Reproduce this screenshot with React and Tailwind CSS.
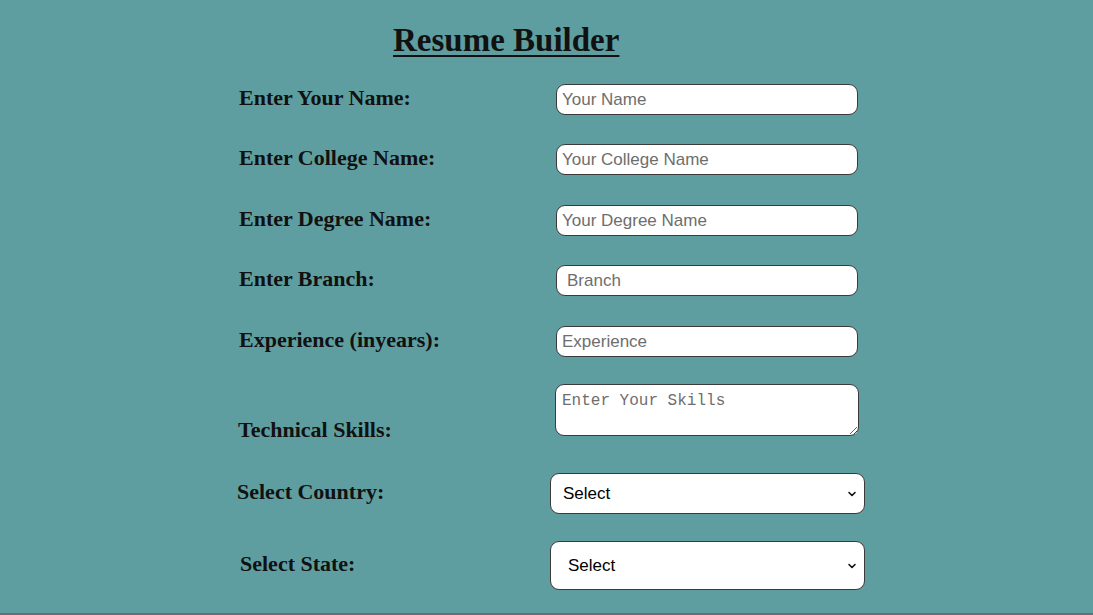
import React from "react";

const serif = { fontFamily: '"Liberation Serif", "Times New Roman", serif' };

function Chevron() {
  return (
    <svg className="pointer-events-none absolute right-[8px] top-1/2 -translate-y-1/2" width="10" height="10" viewBox="0 0 10 10">
      <path d="M2 3.5 L5 6.5 L8 3.5" fill="none" stroke="#111" strokeWidth="1.6" strokeLinecap="round" strokeLinejoin="round" />
    </svg>
  );
}

function Row({ label, placeholder, mt, inputPl = "pl-[5px]" }) {
  return (
    <div className={`flex items-center h-[31px] ${mt}`}>
      <div className="w-[317px] text-[22px] leading-none pb-[4px] font-bold text-[#111]" style={serif}>{label}</div>
      <input
        type="text"
        placeholder={placeholder}
        className={`w-[302px] h-[31px] rounded-[9px] border border-[#3a3a3a] bg-white ${inputPl} text-[17px] placeholder:text-[#6e6e6e] outline-none`}
        style={{ fontFamily: '"Liberation Sans", Arial, sans-serif' }}
      />
    </div>
  );
}

export default function App() {
  return (
    <div className="w-[1093px] h-[615px] bg-[#5f9ea0] flex flex-col overflow-hidden">
      <div className="flex-1 pl-[239px]">
        <h1
          className="ml-[154px] mt-[24px] text-[33px] leading-none font-bold underline decoration-[2px] underline-offset-[4px] text-[#111]"
          style={serif}
        >
          Resume Builder
        </h1>
        <Row label="Enter Your Name:" placeholder="Your Name" mt="mt-[27px]" />
        <Row label="Enter College Name:" placeholder="Your College Name" mt="mt-[29px]" />
        <Row label="Enter Degree Name:" placeholder="Your Degree Name" mt="mt-[30px]" />
        <Row label="Enter Branch:" placeholder="Branch" mt="mt-[29px]" inputPl="pl-[10px]" />
        <Row label="Experience (inyears):" placeholder="Experience" mt="mt-[30px]" />
        <div className="flex items-end mt-[27px] h-[52px]">
          <div className="w-[317px] -ml-[1px] text-[22px] font-bold text-[#111] leading-none -mb-[5px]" style={serif}>
            Technical Skills:
          </div>
          <textarea
            placeholder="Enter Your Skills"
            className="w-[304px] h-[52px] rounded-[9px] border border-[#3a3a3a] bg-white px-[6px] pt-[6px] text-[16px] leading-[20px] placeholder:text-[#6e6e6e] outline-none resize-y"
            style={{ fontFamily: '"Liberation Mono", "Courier New", monospace' }}
          />
        </div>
        <div className="flex items-center mt-[37px] h-[41px]">
          <div className="w-[313px] -ml-[2px] text-[22px] leading-none pb-[4px] font-bold text-[#111]" style={serif}>Select Country:</div>
          <div className="relative">
            <select
              className="appearance-none w-[315px] h-[41px] rounded-[9px] border border-[#3a3a3a] bg-white pl-[12px] text-[17px] text-black outline-none"
              style={{ fontFamily: '"Liberation Sans", Arial, sans-serif' }}
              defaultValue="Select"
            >
              <option>Select</option>
            </select>
            <Chevron />
          </div>
        </div>
        <div className="flex items-center mt-[27px] h-[49px]">
          <div className="w-[310px] ml-[1px] text-[22px] leading-none pb-[4px] font-bold text-[#111]" style={serif}>Select State:</div>
          <div className="relative">
            <select
              className="appearance-none w-[315px] h-[49px] rounded-[9px] border border-[#3a3a3a] bg-white pl-[17px] text-[17px] text-black outline-none"
              style={{ fontFamily: '"Liberation Sans", Arial, sans-serif' }}
              defaultValue="Select"
            >
              <option>Select</option>
            </select>
            <Chevron />
          </div>
        </div>
      </div>
      <div className="h-[2px] bg-[#6f6a78]" />
    </div>
  );
}
